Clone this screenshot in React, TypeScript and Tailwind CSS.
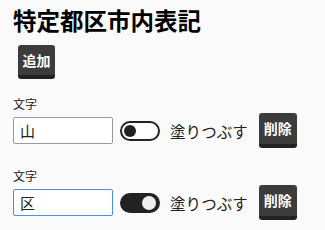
import { useState } from "react";

type Entry = { id: number; text: string; fill: boolean };

function Toggle({ on, onChange }: { on: boolean; onChange: () => void }) {
  return (
    <button
      type="button"
      onClick={onChange}
      className={`flex h-[20px] w-[40px] shrink-0 items-center rounded-full border-2 border-[#222] px-[2px] ${
        on ? "justify-end bg-[#222]" : "justify-start bg-white"
      }`}
    >
      <span className={`block rounded-full ${on ? "h-[14px] w-[14px] bg-[#eee]" : "h-[12px] w-[12px] bg-[#222]"}`} />
    </button>
  );
}

export default function App() {
  const [entries, setEntries] = useState<Entry[]>([
    { id: 1, text: "山", fill: false },
    { id: 2, text: "区", fill: true },
  ]);

  const update = (id: number, patch: Partial<Entry>) =>
    setEntries((es) => es.map((e) => (e.id === id ? { ...e, ...patch } : e)));

  return (
    <main
      className="min-h-[230px] w-[325px] bg-[#fafafa] px-[13px] pt-[4px] text-[#222]"
      style={{ fontFamily: '"Noto Sans CJK JP", "Noto Sans", sans-serif' }}
    >
      <h1 className="text-[23.5px] font-bold leading-[32px] text-black">特定都区市内表記</h1>

      <button
        type="button"
        className="ml-[5px] mt-[9px] h-[34px] w-[37px] rounded-[3px] border-b-4 border-[#222] bg-[#3c3c3c] text-[14px] font-bold text-white"
        onClick={() =>
          setEntries((es) => [...es, { id: Date.now(), text: "", fill: false }])
        }
      >
        追加
      </button>

      <div className="mt-[17px] flex flex-col gap-[20px]">
        {entries.map((e, i) => (
          <div key={e.id}>
            <label className="block text-[12px] leading-[16px]">文字</label>
            <div className="mt-[1px] flex items-center">
              <input
                value={e.text}
                autoFocus={i === 1}
                onChange={(ev) => update(e.id, { text: ev.target.value })}
                className={`h-[27px] w-[100px] rounded-[2px] border bg-white px-[6px] text-[15px] outline-none ${
                  i === 1 ? "border-[#4a90e2]" : "border-[#999]"
                } focus:border-[#4a90e2]`}
              />
              <div className="ml-[7px]">
                <Toggle on={e.fill} onChange={() => update(e.id, { fill: !e.fill })} />
              </div>
              <span className="ml-[10px] text-[15.5px] leading-[20px]">塗りつぶす</span>
              <button
                type="button"
                onClick={() => setEntries((es) => es.filter((x) => x.id !== e.id))}
                className="ml-[11px] h-[35px] w-[38px] rounded-[3px] border-b-4 border-[#222] bg-[#3c3c3c] text-[14px] font-bold text-white"
              >
                削除
              </button>
            </div>
          </div>
        ))}
      </div>
    </main>
  );
}
